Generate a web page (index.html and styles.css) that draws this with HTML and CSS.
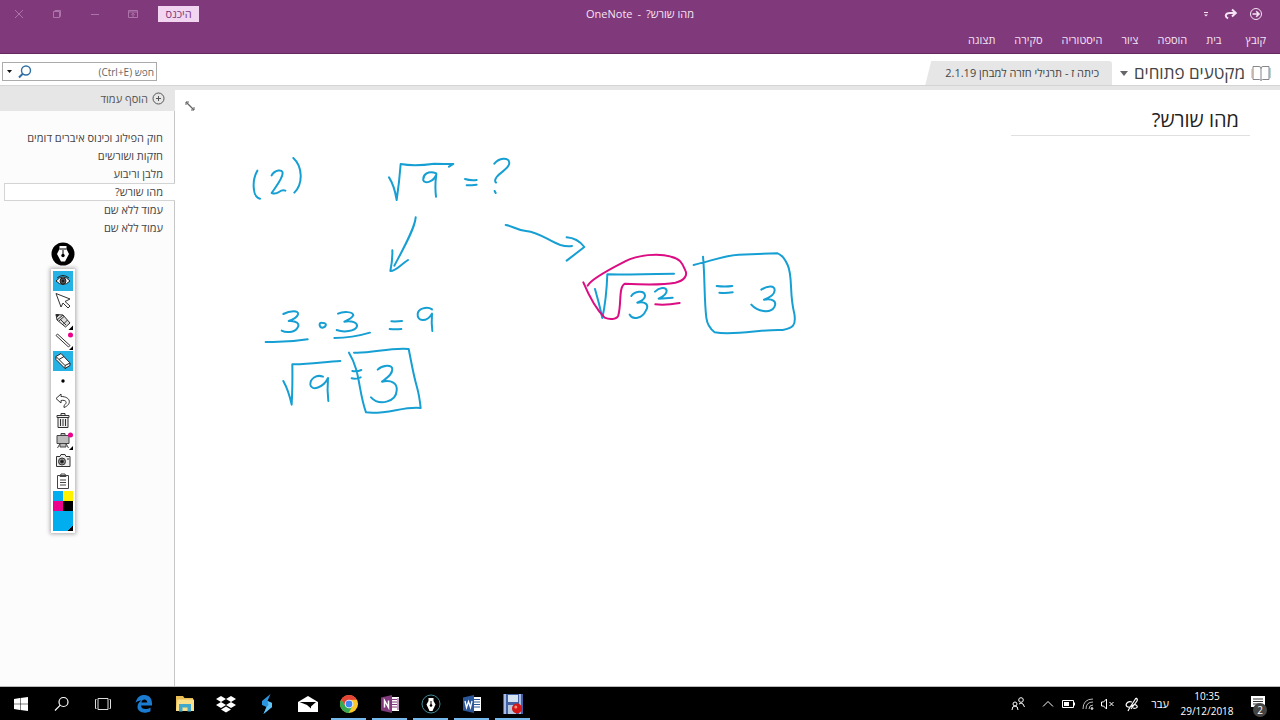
FILE: index.html
```html
<!DOCTYPE html>
<html lang="he" dir="rtl">
<head>
<meta charset="utf-8">
<title>מהו שורש? - OneNote</title>
<link rel="stylesheet" href="styles.css">
</head>
<body>
<header class="app-header">
  <div class="title-bar">
    <div class="quick-access">
      <button class="icon-btn" aria-label="הקודם"><svg width="14" height="14" viewBox="0 0 14 14" fill="none" stroke="currentColor"><circle cx="7" cy="7" r="5.5"/><path d="M3.5 7H10M7.2 4.2 10 7 7.2 9.8" stroke-width="1.6"/></svg></button>
      <button class="icon-btn" aria-label="בצע שוב"><svg width="14" height="14" viewBox="0 0 14 14" fill="none" stroke="currentColor" stroke-width="2"><path d="M4 11.5C0 9 2 6 6 6H11M8 2.5 11.8 6 8 9.5"/></svg></button>
      <button class="icon-btn" aria-label="התאמה אישית"><svg width="14" height="14" viewBox="0 0 14 14" fill="currentColor"><path d="M5 5h4v1H5zM5 7.500h4L7 9.500z"/></svg></button>
    </div>
    <h1 class="window-title"><span>מהו שורש?</span><span>-</span><span>OneNote</span></h1>
    <div class="window-controls" dir="ltr">
      <button class="win-btn" aria-label="סגור"><svg width="10" height="10" viewBox="0 0 10 10" fill="none" stroke="currentColor"><path d="M1 1l8 8M9 1 1 9"/></svg></button>
      <button class="win-btn" aria-label="שחזר"><svg width="10" height="10" viewBox="0 0 10 10" fill="none" stroke="currentColor"><path d="M1.500 2.500h6v6h-6zM3 2.500V1.500h5.500v6H7.500"/></svg></button>
      <button class="win-btn" aria-label="מזער"><svg width="10" height="10" viewBox="0 0 10 10" stroke="currentColor"><path d="M1 5.500h8"/></svg></button>
      <button class="win-btn" aria-label="אפשרויות תצוגה"><svg width="10" height="10" viewBox="0 0 10 10" fill="none" stroke="currentColor"><path d="M.5 1.500h9v7h-9zM1 3h8M5 8V4.500M3.200 6 5 4.300 6.800 6"/></svg></button>
      <button class="sign-in">היכנס</button>
    </div>
  </div>
  <nav class="menu">
    <button class="menu-item file">קובץ</button><button class="menu-item">בית</button><button class="menu-item">הוספה</button><button class="menu-item">ציור</button><button class="menu-item">היסטוריה</button><button class="menu-item">סקירה</button><button class="menu-item">תצוגה</button>
  </nav>
</header>

<div class="notebook-bar">
  <button class="notebook">
    <svg width="20" height="16" viewBox="0 0 20 16" fill="none" stroke="#85858a"><path d="M2 1.500h6q2 0 2 2 0-2 2-2h6v13h-6.500L10 15.500 8.500 14.500H2zM10 3v12"/><path d="M1 4v9" stroke="#c9a58c"/><path d="M19 3v10" stroke="#6aa9b0"/></svg>
    <span>מקטעים פתוחים</span>
    <svg width="8" height="6" viewBox="0 0 8 6"><path d="M0 1h8L4 6z" fill="#666"/></svg>
  </button>
  <button class="section-tab">כיתה ז - תרגילי חזרה למבחן 2.1.19</button>
  <div class="search">
    <input type="text" aria-label="חיפוש" placeholder="חפש (Ctrl+E)">
    <button class="icon-btn" aria-label="חפש"><svg width="14" height="14" viewBox="0 0 14 14" fill="none" stroke="#2f6ea5"><circle cx="8" cy="5.500" r="4.500" stroke-width="1.400"/><path d="M5 8.500 1 12.500" stroke-width="2"/></svg></button>
    <button class="scope-btn" aria-label="טווח חיפוש"><svg width="5" height="4" viewBox="0 0 5 4"><path d="M0 0h5L2.500 3z" fill="#111"/></svg></button>
  </div>
</div>

<div class="workspace">
  <main class="canvas">
    <h2 class="page-title">מהו שורש?</h2>
    <button class="expand" aria-label="הרחב"><svg width="12" height="12" viewBox="0 0 12 12" fill="none" stroke="#666"><path d="M2 2l8 8" stroke-width="1.300"/><path d="M2 5V2H5M10 7v3H7"/></svg></button>
    <svg class="ink" width="640" height="300" viewBox="175 130 640 300" role="img" aria-label="פתרון בכתב יד">
      <g transform="translate(240 140) scale(.33333)">
        <path d="M52 92C42 110 39 130 42 150Q44 172 60 176M95 106C104 90 128 86 128 99C128 116 106 142 95 159Q107 163 117 156T136 152M160 54C188 80 190 131 163 158"/>
        <path d="M447 112Q463 136 470 180Q478 125 482 72C515 78 555 75 583 71Q615 72 640 72L627 80M589 100C565 90 548 104 550 121C554 133 582 125 589 103Q584 137 588 170M675 117Q690 122 710 120M680 136Q696 136 710 134M763 71C776 54 807 49 808 69C808 86 783 94 770 111Q762 122 768 128M764 153L767 159"/>
        <path d="M527 232C525 264 490 326 463 377M457 331Q458 361 451 393C468 394 479 376 504 360M797 255C820 258 830 271 858 273C900 277 929 305 961 315Q982 321 996 318M980 292Q1012 294 1033 321Q1007 341 980 362"/>
      </g>
      <g transform="translate(250 270) scale(.33333)">
        <path d="M100 132C119 122 148 120 144 133Q140 145 116 153C140 151 151 162 142 174C134 188 108 189 95 182M47 216Q114 218 173 208M215 158C205 158 208 173 217 173C230 171 232 158 218 159M264 131C281 123 309 125 310 136Q303 147 283 155C306 151 323 158 321 169C315 184 281 188 260 180M253 204Q306 204 360 188M424 154Q440 155 456 153M419 177Q436 179 454 177M546 118C531 108 504 116 503 132C501 155 530 158 546 131Q544 159 547 183"/>
        <path d="M100 333Q116 362 125 404Q128 350 127 283C175 284 220 276 271 273M219 320C199 312 180 327 181 344C184 365 221 352 234 324Q231 360 235 393M307 303Q321 306 334 300M305 325Q318 328 332 322M383 299C395 287 427 280 427 298C427 315 409 325 396 335C425 329 443 340 440 362C438 397 387 408 363 382M312 248C365 251 417 232 476 237C484 276 490 314 501 352Q508 377 512 414C466 407 402 436 348 427C325 364 331 303 297 248"/>
      </g>
      <g transform="translate(570 240) scale(.33333)">
        <path d="M75 147Q87 188 97 234C105 198 110 156 112 103Q172 104 312 101M184 168C193 154 222 149 225 166C226 179 211 184 202 188C224 183 239 193 228 211C217 235 188 242 179 224M255 155C267 143 288 139 290 152Q290 165 266 176Q288 175 308 173M399 50C405 110 402 175 409 233Q412 260 434 277C497 288 579 266 638 270C668 265 679 257 673 221C657 160 669 110 653 75Q640 46 623 40Q563 41 506 44C460 47 420 64 371 75M440 138Q464 141 487 138M448 158Q465 161 488 157M574 149C593 136 615 136 614 151C614 165 593 175 582 179C607 174 622 184 613 201C601 222 562 215 544 194"/>
        <path class="ink-pink" d="M40 127C53 158 78 207 104 233C117 239 140 240 145 226C155 191 145 140 165 131C203 133 272 136 316 128C342 122 354 107 346 91C337 68 329 56 303 50C264 38 203 45 165 64C128 83 62 116 53 137M256 193Q285 197 329 189"/>
      </g>
    </svg>
  </main>
  <aside class="pages">
    <button class="add-page"><svg width="13" height="13" viewBox="0 0 13 13" fill="none" stroke="#555"><circle cx="6.500" cy="6.500" r="5.500"/><path d="M6.500 4v5M4 6.500h5"/></svg><span>הוסף עמוד</span></button>
    <ul class="page-list">
      <li><a href="#">חוק הפילוג וכינוס איברים דומים</a></li>
      <li><a href="#">חזקות ושורשים</a></li>
      <li><a href="#">מלבן וריבוע</a></li>
      <li><a href="#" class="current" aria-current="page">מהו שורש?</a></li>
      <li><a href="#">עמוד ללא שם</a></li>
      <li><a href="#">עמוד ללא שם</a></li>
    </ul>
  </aside>
</div>

<div class="pen-tools">
  <button class="pen-logo" aria-label="עט"><svg width="24" height="24" viewBox="0 0 24 24"><circle cx="12" cy="12" r="11.500" fill="#000"/><path d="M8.500 4h7v3l2.500 5-4 7.500h-4L6 12l2.500-5z" fill="#fff"/><path d="M12 8v6M8.500 7h7" stroke="#000"/><circle cx="12" cy="13.500" r="1.700"/></svg></button>
  <div class="pen-panel">
    <button class="tool on" aria-label="תצוגה"><svg viewBox="0 0 20 20" fill="none" stroke="#222"><path d="M3 10q7-8 14 0-7 7-14 0z" fill="#fff"/><path d="M4 7q6-5 12 0" /><circle cx="10" cy="10" r="3" fill="#555"/><circle cx="10" cy="10" r="1" fill="#000"/></svg></button>
    <button class="tool" aria-label="בחירה"><svg viewBox="0 0 20 20" fill="#fff" stroke="#333"><path d="M3 2.500 17 8l-5 2.500 5 4.500-2 2-5-5-2 4z"/></svg></button>
    <button class="tool" aria-label="עיפרון"><svg viewBox="0 0 20 20" fill="#ddd" stroke="#333"><path d="M3 3.500 10 4l7 8-4.500 4L4 9z"/><path d="M4 9l6-5M6 10l5-4.500M10 13.500 14.500 9M7 8l6 6"/><path d="M3 3.500 6 4 4 6z" fill="#222"/><path d="M20 14.500V19h-4.500z" fill="#000" stroke="none"/></svg></button>
    <button class="tool" aria-label="קו"><svg viewBox="0 0 20 20" fill="#fff" stroke="#333"><path d="M3 4.500 4.500 3 17 14.500 15.500 16z"/><circle cx="17.500" cy="4" r="2.500" fill="#ec008c" stroke="none"/><path d="M20 15v4h-4z" fill="#000" stroke="none"/></svg></button>
    <button class="tool on" aria-label="מחק"><svg viewBox="0 0 20 20" fill="#fff" stroke="#222"><path d="M3 5.500 8 2.500 17 12v2.500L12 17.500 3 8.500z"/><path d="M3 5.500 12 14.500l5-2.500M12 14.500v3M6 8.500l5-3"/></svg></button>
    <button class="tool" aria-label="עובי"><svg viewBox="0 0 20 20"><circle cx="10" cy="10" r="1.700"/></svg></button>
    <button class="tool" aria-label="בטל"><svg viewBox="0 0 20 20" fill="#fff" stroke="#333"><path d="M8 3 3 7.500 8 12V9.500c5-1 7 2 3 5v2c8-3 7-11-3-11z"/></svg></button>
    <button class="tool" aria-label="מחק הכול"><svg viewBox="0 0 20 20" fill="#eee" stroke="#333"><path d="M5 6.500h10v10H5zM4 4.500h12v2H4zM8 4V2.500h4V4M7.500 8v7M10 8v7M12.500 8v7"/></svg></button>
    <button class="tool" aria-label="לוח"><svg viewBox="0 0 20 20" fill="#bbb" stroke="#444"><path d="M4 4.500h12v8H4zM8 2.500h4v2H8zM7 12.500 4.500 17M13 12.500l2.500 4.500M7 13v3h6v-3"/><circle cx="17.500" cy="4" r="2.500" fill="#ec008c" stroke="none"/><path d="M20 15v4h-4z" fill="#000" stroke="none"/></svg></button>
    <button class="tool" aria-label="מצלמה"><svg viewBox="0 0 20 20" fill="#eee" stroke="#333"><path d="M3.500 5.500H7L8 3.500h4l1 2h4v10H3.500z"/><circle cx="9" cy="10.500" r="3.500" fill="#999"/><circle cx="9" cy="10.500" r="1.500" fill="#111"/><path d="M14 8h2"/></svg></button>
    <button class="tool" aria-label="לוח העתקה"><svg viewBox="0 0 20 20" fill="#fff" stroke="#444"><path d="M4.500 4.500h11v13h-11zM7 5.500l1-2.500h4l1 2.500zM7 9h6M7 11.500h6M7 14h6"/></svg></button>
    <div class="swatches">
      <button class="swatch cyan" aria-label="תכלת"></button><button class="swatch yellow" aria-label="צהוב"></button>
      <button class="swatch magenta" aria-label="ורוד"></button><button class="swatch black" aria-label="שחור"></button>
      <button class="swatch active-color" aria-label="צבע נוכחי"></button>
    </div>
  </div>
</div>

<footer class="taskbar" dir="ltr">
  <div class="apps">
    <button class="app" aria-label="התחל"><svg viewBox="0 0 20 20" fill="#fff"><path d="M3 5l6-.9V9.700H3zM9.500 4 17 3v6.700H9.500zM3 10.300h6v5.600L3 15zM9.500 10.300H17V17l-7.500-1z"/></svg></button>
    <button class="app" aria-label="חיפוש"><svg viewBox="0 0 20 20" fill="none" stroke="#fff" stroke-width="1.200"><circle cx="11.500" cy="8" r="4.500"/><path d="M8.300 11.200 3 16.500"/></svg></button>
    <button class="app" aria-label="תצוגת משימות"><svg viewBox="0 0 20 20" fill="none" stroke="#ddd"><path d="M5 4.500h10v11H5zM3.500 5.500h-1v9h1M16.500 5.500h1v9h-1"/></svg></button>
    <button class="app" aria-label="Edge"><svg viewBox="0 0 20 20" fill="#1b7bd0"><path d="M1.500 9C3 2.500 7 1 10.500 1 15.500 1 18 5 18 9.500v2H7c0 4 5.500 4.500 9.500 2v3.700C10 20.500 3 18 3.500 12.500 3.700 9.500 5.500 7.500 7.500 6.500 4.500 6.500 2.500 7.500 1.500 9zM7.300 8.500h6C13 4.500 8 4.700 7.300 8.500z"/></svg></button>
    <button class="app" aria-label="סייר הקבצים"><svg viewBox="0 0 20 20"><path d="M1 2h7l1.500 2H18v13H1z" fill="#e7bd54"/><path d="M2.500 5.500H19V17h-18z" fill="#fbe08b"/><path d="M4 10h12v7.500h-3.500v-4h-5v4H4z" fill="#43a7ca"/></svg></button>
    <button class="app" aria-label="Dropbox"><svg viewBox="0 0 20 20" fill="#fff"><path d="M5 2l5 3-5 3-5-3zM15 2l5 3-5 3-5-3zM5 8l5 3-5 3-5-3zM15 8l5 3-5 3-5-3zM10 12.500l5 3-5 3-5-3z"/></svg></button>
    <button class="app" aria-label="סנכרון"><svg viewBox="0 0 20 20"><path d="M13.500 0 5 7v4l4.500 2-3 7 8.500-7V9l-4.500-2z" fill="#2c94dc"/><path d="M10.500 7 15 9v4l-8.500 7 3-7 2-2z" fill="#62c3f4"/></svg></button>
    <button class="app" aria-label="דואר"><svg viewBox="0 0 20 20"><path d="M0 8l10-6 10 6v10H0z" fill="#fff"/><path d="M1.500 8H18l-5 4.500v2L9 11z" fill="#000"/></svg></button>
    <button class="app open" aria-label="Chrome"><svg viewBox="0 0 20 20"><circle cx="10" cy="10" r="9" fill="#fbc72c"/><path d="M2.200 5.500A9 9 0 0 1 17.900 5.700L10 6 6 12z" fill="#e54537"/><path d="M2.200 5.500A9 9 0 0 0 9.500 19l4-7-7 0z" fill="#35a853"/><circle cx="10" cy="10" r="4.300" fill="#fff"/><circle cx="10" cy="10" r="3.400" fill="#4285f4"/></svg></button>
    <button class="app open" aria-label="OneNote"><svg viewBox="0 0 20 20"><path d="M9 3h10v14H9z" fill="#fff"/><path d="M12 5.500h5M12 8h5M12 10.500h5M12 13h5M18 4v12" stroke="#80397b"/><path d="M1 3.500 12 1v18L1 16.500z" fill="#80397b"/><path d="M4.500 13.500v-7l4 7v-7" fill="none" stroke="#fff" stroke-width="1.500"/></svg></button>
    <button class="app open" aria-label="עט"><svg viewBox="0 0 20 20"><circle cx="10" cy="10" r="9" fill="#000" stroke="#438a99"/><path d="M7.500 4h5v3l2 3.500-3 6.500h-3l-3-6.500 2-3.500z" fill="#fff"/><path d="M10 7v4" stroke="#000"/><circle cx="10" cy="11.500" r="1.300"/></svg></button>
    <button class="app open" aria-label="Word"><svg viewBox="0 0 20 20"><path d="M9 3h10v14H9z" fill="#fff"/><path d="M12 5.500h6M12 8h6M12 10.500h6M12 13h6" stroke="#2b579a"/><path d="M1 3.500 12 1v18L1 16.500z" fill="#2b579a"/><path d="M3 7l1.500 6.500 2-6 2 6L10 7" fill="none" stroke="#fff" stroke-width="1.300"/></svg></button>
    <button class="app open" aria-label="מקליט"><svg viewBox="0 0 20 20"><path d="M0 0h20v20H0z" fill="#4460a4"/><path d="M5 1h10v7H5z" fill="#d5e2f2"/><path d="M1 0h2v20H1zM16 0h2v20h-2z" fill="#a9bde2"/><path d="M5 11h8v9H5z" fill="#b7c7dd"/><circle cx="14" cy="14.500" r="5" fill="#d41515"/><circle cx="12.800" cy="13" r="1.500" fill="#ff8b80"/></svg></button>
  </div>
  <div class="tray">
    <button class="tray-btn people" aria-label="אנשים"><svg viewBox="0 0 16 16" fill="none" stroke="#fff"><circle cx="11" cy="4" r="2.300"/><circle cx="5" cy="8" r="2"/><path d="M2 14q0-4 3-4t3 4M9 8q2-2 4 0l1.500 3"/></svg></button>
    <button class="tray-btn" aria-label="סמלים מוסתרים"><svg viewBox="0 0 16 16" fill="none" stroke="#fff"><path d="M3 10.500 8 5.500l5 5"/></svg></button>
    <button class="tray-btn" aria-label="סוללה"><svg viewBox="0 0 16 16" fill="none" stroke="#fff"><path d="M2.500 4.500h11v7h-11zM14.500 6.500v3"/><path d="M4 6h5v4H4z" fill="#fff" stroke="none"/></svg></button>
    <button class="tray-btn" aria-label="רשת"><svg viewBox="0 0 16 16" fill="none" stroke="#bbb"><path d="M3 13Q3 3 13 3M6 13Q6 6 13 6M9 13Q9 9 13 9"/><circle cx="12" cy="12.500" r="1" fill="#fff"/></svg></button>
    <button class="tray-btn" aria-label="מושתק"><svg viewBox="0 0 16 16" fill="none" stroke="#fff"><path d="M1.500 6h2L6.500 3v10l-3-3h-2zM9.500 6l4 4M13.500 6l-4 4"/></svg></button>
    <button class="tray-btn pen" aria-label="דיו"><svg viewBox="0 0 16 16" fill="none" stroke="#fff" stroke-width="1.200"><path d="M12 2 5 13M12 2q2 1 1 3L7 13M8 6C3 4 0 10 4 11s5-4 8-2 0 4-3 3M5 13l-1 2"/></svg></button>
    <button class="language" dir="rtl">עבר</button>
    <button class="clock"><span>10:35</span><span>29/12/2018</span></button>
    <button class="notifications" aria-label="2 התראות"><svg width="16" height="18" viewBox="0 0 16 18"><path d="M1 1h14v11H7l-3 3v-3H1z" fill="#fff"/><path d="M3 4h10M3 6.500h10M3 9h6" stroke="#333"/></svg><span class="badge">2</span></button>
  </div>
</footer>
</body>
</html>
```

FILE: styles.css
```css
* { box-sizing: border-box; }

body {
  margin: 0;
  min-height: 100vh;
  display: flex;
  flex-direction: column;
  position: relative;
  background: #fff;
  color: #444;
  font: 11px/16px "Open Sans", "Liberation Sans", sans-serif;
}

button, input { font: inherit; color: inherit; }

button {
  padding: 0;
  border: 0;
  background: none;
  display: flex;
  align-items: center;
  justify-content: center;
}

svg { display: block; flex: none; }

/* Header */
.app-header {
  background: #80397b;
  color: #f6e3f5;
  border-bottom: 1px solid #642a60;
}

.title-bar {
  display: grid;
  grid-template-columns: 1fr auto 1fr;
  align-items: center;
  height: 27px;
}

.quick-access { display: flex; gap: 11px; padding-right: 17px; }

.window-title {
  display: flex;
  gap: 5px;
  margin: 0;
  font-size: 11px;
  font-weight: 400;
}

.window-controls { display: flex; align-items: center; }
.win-btn { width: 38px; height: 26px; color: #ad74aa; }

.sign-in {
  width: 41px;
  height: 16px;
  margin-left: 6px;
  background: #f2d5f0;
  color: #80397b;
}

.menu {
  display: flex;
  gap: 19px;
  height: 26px;
  padding: 0 14px;
}

.menu .file { margin-left: 5px; }

/* Notebook bar */
.notebook-bar {
  display: flex;
  align-items: flex-end;
  height: 32px;
  border-bottom: 1px solid #d4d4d4;
}

.notebook {
  gap: 6px;
  height: 24px;
  padding: 0 9px 0 8px;
  font-size: 17px;
}

.section-tab {
  height: 24px;
  padding: 0 13px 0 20px;
  background: #e6e6e6;
  border-radius: 0 3px 0 0;
  clip-path: polygon(6px 0, 100% 0, 100% 100%, 0 100%);
}

.search {
  display: flex;
  align-items: center;
  width: 155px;
  height: 19px;
  margin: 0 auto 4px 2px;
  border: 1px solid #ababab;
}

.search input {
  flex: 1;
  min-width: 0;
  padding: 0 2px;
  border: 0;
  outline: 0;
  background: none;
  font-size: 10px;
}

.search input::placeholder { color: #666; opacity: 1; }
.scope-btn { width: 12px; height: 16px; }
.search .icon-btn { margin-left: 3px; }

/* Workspace */
.workspace { flex: 1; display: flex; }

.canvas {
  flex: 1;
  position: relative;
  border-top: 4px solid #e6e6e6;
  padding: 16px 30px;
}

.page-title {
  width: 239px;
  margin: 0;
  padding: 0 11px 2px;
  border-bottom: 1px solid #e0e0e0;
  color: #222;
  font-size: 20px;
  font-weight: 400;
  line-height: 27px;
}

.expand { position: absolute; left: 9px; top: 10px; }

.ink {
  position: absolute;
  left: 0;
  top: 40px;
  fill: none;
  stroke: #169fd3;
  stroke-width: 6px;
  stroke-linecap: round;
  stroke-linejoin: round;
}

.ink-pink { stroke: #dc0c82; }

.pages {
  display: flex;
  flex-direction: column;
  width: 175px;
  background: #fcfcfc;
}

.add-page {
  height: 25px;
  justify-content: flex-start;
  gap: 4px;
  padding-right: 10px;
  background: #e6e6e6;
  color: #555;
}

.page-list {
  flex: 1;
  margin: 0;
  padding: 18px 0 0;
  list-style: none;
  background: linear-gradient(#c6c6c6, #c6c6c6) right / 1px 100% no-repeat;
}

.page-list a {
  display: block;
  height: 18px;
  margin-left: 4px;
  padding-right: 12px;
  border: 1px solid transparent;
  border-right: 0;
  color: #444;
  white-space: nowrap;
  text-decoration: none;
}

.page-list .current { background: #fff; border-color: #d4d4d4; }

/* Floating pen toolbar */
.pen-tools {
  position: absolute;
  left: 51px;
  top: 242px;
  display: flex;
  flex-direction: column;
  align-items: center;
  gap: 3px;
}

.pen-panel {
  padding: 2px;
  background: #fff;
  box-shadow: 0 0 4px 1px #aaa;
}

.tool { width: 20px; height: 20px; }
.tool svg { width: 20px; height: 20px; }
.tool.on { background: #25b3e6; }

.swatches {
  display: grid;
  grid-template-columns: 10px 10px;
  direction: ltr;
}

.swatch { height: 10px; }
.cyan { background: #00aeef; }
.yellow { background: #fff200; }
.magenta { background: #ec008c; }
.black { background: #000; }

.active-color {
  grid-column: span 2;
  height: 20px;
  background: linear-gradient(135deg, #00aeef 86%, #000 86%);
}

/* Taskbar */
.taskbar {
  display: flex;
  justify-content: space-between;
  height: 34px;
  border-top: 1px solid #bbb;
  background: #000;
  color: #fff;
}

.apps, .tray { display: flex; }
.app { width: 41px; }
.app svg { width: 20px; height: 20px; }

.app.open {
  background: linear-gradient(#76b9ed, #76b9ed) bottom / 35px 2px no-repeat;
}

.tray-btn { width: 20px; }
.tray-btn svg { width: 16px; height: 16px; }
.people { margin-right: 10px; }
.pen { margin-left: 4px; }
.language { width: 36px; }

.clock {
  width: 58px;
  flex-direction: column;
  font-size: 10px;
  line-height: 15px;
}

.notifications {
  position: relative;
  width: 44px;
}

.badge {
  position: absolute;
  right: 13px;
  bottom: 3px;
  width: 14px;
  height: 14px;
  border-radius: 50%;
  background: #444;
  font-size: 10px;
  line-height: 14px;
}
```
